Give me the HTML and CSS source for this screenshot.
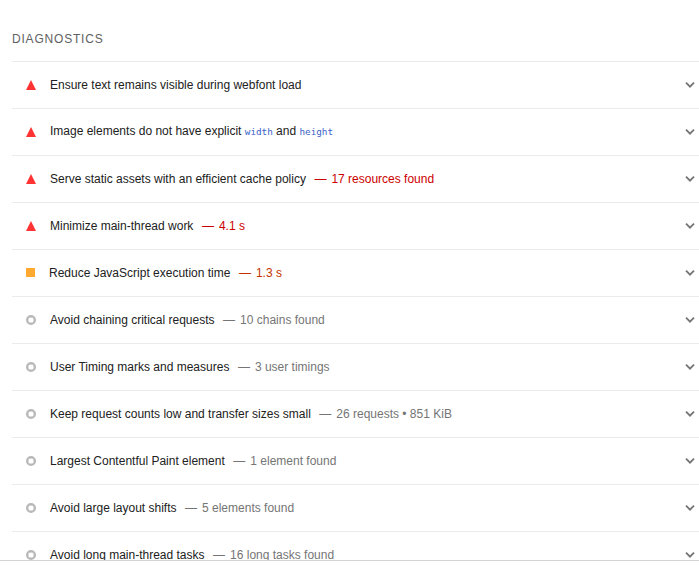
FILE: index.html
```html
<!DOCTYPE html>
<html lang="en">
<head>
<meta charset="utf-8">
<title>Diagnostics</title>
<link rel="stylesheet" href="styles.css">
</head>
<body>
<main class="report">
<h2 class="heading">Diagnostics</h2>
<ul class="audits">
<li class="audit fail"><i class="mark"></i><span class="title">Ensure text remains visible during webfont load</span><svg class="chevron" viewBox="0 0 10 6"><path d="M1 .7l4 4 4-4"/></svg></li>
<li class="audit fail"><i class="mark"></i><span class="title code-title">Image elements do not have explicit <code>width</code> and <code>height</code></span><svg class="chevron" viewBox="0 0 10 6"><path d="M1 .7l4 4 4-4"/></svg></li>
<li class="audit fail"><i class="mark"></i><span class="title">Serve static assets with an efficient cache policy</span><span class="value"><span class="dash">—</span>17 resources found</span><svg class="chevron" viewBox="0 0 10 6"><path d="M1 .7l4 4 4-4"/></svg></li>
<li class="audit fail"><i class="mark"></i><span class="title">Minimize main-thread work</span><span class="value"><span class="dash">—</span>4.1 s</span><svg class="chevron" viewBox="0 0 10 6"><path d="M1 .7l4 4 4-4"/></svg></li>
<li class="audit average"><i class="mark"></i><span class="title">Reduce JavaScript execution time</span><span class="value"><span class="dash">—</span>1.3 s</span><svg class="chevron" viewBox="0 0 10 6"><path d="M1 .7l4 4 4-4"/></svg></li>
<li class="audit info"><i class="mark"></i><span class="title">Avoid chaining critical requests</span><span class="value"><span class="dash">—</span>10 chains found</span><svg class="chevron" viewBox="0 0 10 6"><path d="M1 .7l4 4 4-4"/></svg></li>
<li class="audit info"><i class="mark"></i><span class="title">User Timing marks and measures</span><span class="value"><span class="dash">—</span>3 user timings</span><svg class="chevron" viewBox="0 0 10 6"><path d="M1 .7l4 4 4-4"/></svg></li>
<li class="audit info"><i class="mark"></i><span class="title">Keep request counts low and transfer sizes small</span><span class="value"><span class="dash">—</span>26 requests • 851 KiB</span><svg class="chevron" viewBox="0 0 10 6"><path d="M1 .7l4 4 4-4"/></svg></li>
<li class="audit info"><i class="mark"></i><span class="title">Largest Contentful Paint element</span><span class="value"><span class="dash">—</span>1 element found</span><svg class="chevron" viewBox="0 0 10 6"><path d="M1 .7l4 4 4-4"/></svg></li>
<li class="audit info"><i class="mark"></i><span class="title">Avoid large layout shifts</span><span class="value"><span class="dash">—</span>5 elements found</span><svg class="chevron" viewBox="0 0 10 6"><path d="M1 .7l4 4 4-4"/></svg></li>
<li class="audit info"><i class="mark"></i><span class="title">Avoid long main-thread tasks</span><span class="value"><span class="dash">—</span>16 long tasks found</span><svg class="chevron" viewBox="0 0 10 6"><path d="M1 .7l4 4 4-4"/></svg></li>
</ul>
</main>
</body>
</html>
```
FILE: styles.css
```css
* { box-sizing: border-box; }
body { margin: 0; background: #fff; color: #212121; font: 12px/18px "Liberation Sans", Arial, sans-serif; overflow: hidden; }
.report { height: 561px; padding: 29px 0 0 12px; overflow: hidden; border-bottom: 1px solid #d4d4d4; }
.heading { margin: 0; height: 32px; font-size: 12px; line-height: 20px; font-weight: 400; letter-spacing: .8px; text-transform: uppercase; color: #616161; }
.audits { list-style: none; margin: 0; padding: 0; }
.audit { display: flex; align-items: center; height: 47px; padding: 0 4px 0 14px; border-top: 1px solid #ebebeb; white-space: pre; }
.mark { flex: none; width: 10px; height: 10px; margin-right: 14px; }
.fail .mark { background: #f33; clip-path: polygon(50% 0, 100% 100%, 0 100%); }
.average .mark { width: 9px; height: 9px; margin-bottom: 1px; background: #ffa931; }
.info .mark { border: 2.5px solid #b8b8b8; border-radius: 50%; border-width: 2px; box-shadow: inset 0 0 0 .4px #b8b8b8; }
.code-title { padding-bottom: 2px; }
.value { margin-left: 8.5px; color: #757575; }
.dash { margin-right: 5px; }
.fail .value { color: #c00; }
.average .value { color: #c33300; }
code { font: 9.3px "DejaVu Sans Mono", monospace; color: #3b5fc9; }
.chevron { flex: none; width: 10px; height: 6px; margin-left: auto; fill: none; stroke: #757575; stroke-width: 1.8; }
```
